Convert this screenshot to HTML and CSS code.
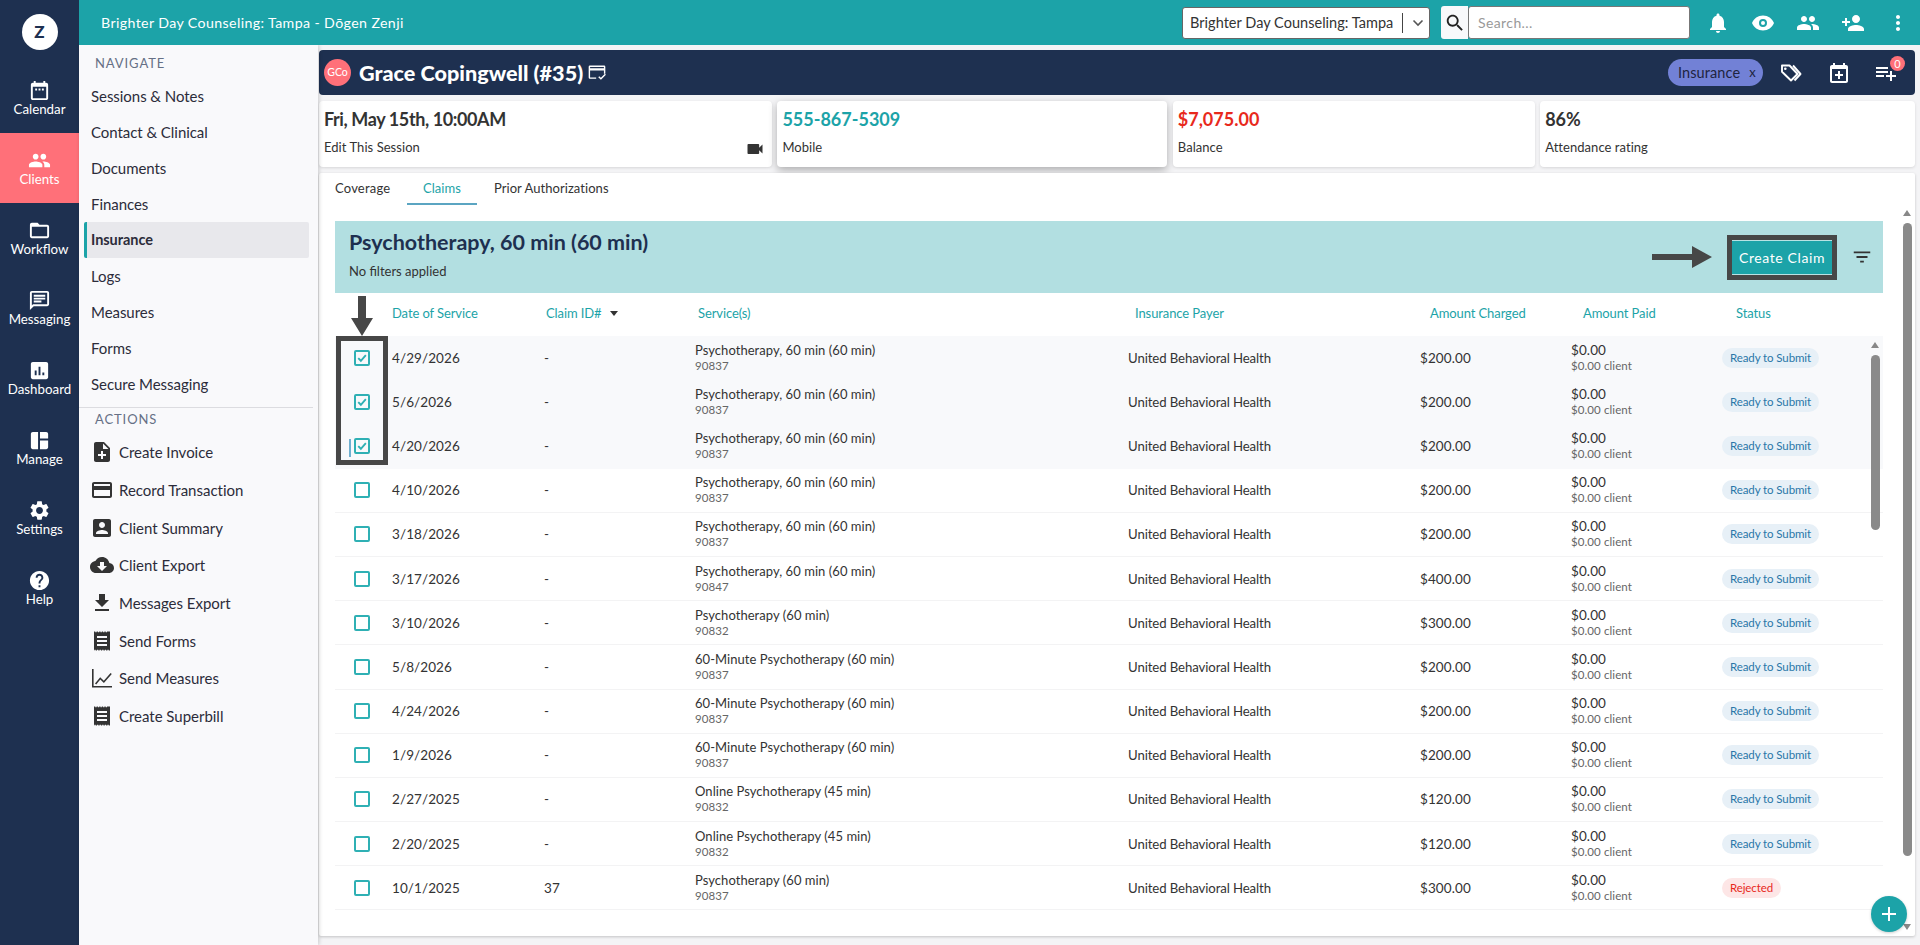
FILE: index.html
```html
<!DOCTYPE html>
<html lang="en">
<head>
<meta charset="utf-8">
<title>Insurance Claims</title>
<link rel="stylesheet" href="styles.css">
</head>
<body>
<svg class="sprite" aria-hidden="true">
<symbol id="i-cal" viewBox="0 0 24 24"><path d="M19 4h-1V2h-2v2H8V2H6v2H5c-1.1 0-2 .9-2 2v14c0 1.1.9 2 2 2h14c1.1 0 2-.9 2-2V6c0-1.1-.9-2-2-2zm0 16H5V8h14v12zM7.5 10h2v2h-2zm3.5 0h2v2h-2zm3.5 0h2v2h-2z"/></symbol>
<symbol id="i-people" viewBox="0 0 24 24"><path d="M16 11c1.66 0 2.99-1.34 2.99-3S17.66 5 16 5c-1.66 0-3 1.34-3 3s1.34 3 3 3zm-8 0c1.66 0 2.99-1.34 2.99-3S9.66 5 8 5C6.34 5 5 6.34 5 8s1.34 3 3 3zm0 2c-2.33 0-7 1.17-7 3.5V19h14v-2.5c0-2.33-4.67-3.5-7-3.5zm8 0c-.29 0-.62.02-.97.05 1.16.84 1.97 1.97 1.97 3.45V19h6v-2.5c0-2.33-4.67-3.5-7-3.5z"/></symbol>
<symbol id="i-folder" viewBox="0 0 24 24"><path d="M20 6h-8l-2-2H4c-1.1 0-1.99.9-1.99 2L2 18c0 1.1.9 2 2 2h16c1.1 0 2-.9 2-2V8c0-1.1-.9-2-2-2zm0 12H4V8h16v10z"/></symbol>
<symbol id="i-msg" viewBox="0 0 24 24"><path d="M20 2H4c-1.1 0-1.99.9-1.99 2L2 22l4-4h14c1.1 0 2-.9 2-2V4c0-1.1-.9-2-2-2zm0 14H5.17L4 17.17V4h16v12zM6 12h8v2H6zm0-3h12v2H6zm0-3h12v2H6z"/></symbol>
<symbol id="i-chart" viewBox="0 0 24 24"><path d="M19 3H5c-1.1 0-2 .9-2 2v14c0 1.1.9 2 2 2h14c1.1 0 2-.9 2-2V5c0-1.1-.9-2-2-2zM9 17H7v-5h2v5zm4 0h-2V8h2v9zm4 0h-2v-3h2v3z"/></symbol>
<symbol id="i-dash" viewBox="0 0 24 24"><path d="M10.5 21H5c-1.1 0-2-.9-2-2V5c0-1.1.9-2 2-2h5.5v18zm2 0H19c1.1 0 2-.9 2-2v-7h-8.500v9zM21 10V5c0-1.100-.9-2-2-2h-6.500v7H21z"/></symbol>
<symbol id="i-gear" viewBox="0 0 24 24"><path d="M19.14 12.94c.04-.3.06-.61.06-.94 0-.32-.02-.64-.07-.94l2.03-1.58c.18-.14.23-.41.12-.61l-1.92-3.32c-.12-.22-.37-.29-.59-.22l-2.39.96c-.5-.38-1.03-.7-1.62-.94l-.36-2.54c-.04-.24-.24-.41-.48-.41h-3.84c-.24 0-.43.17-.47.41l-.36 2.54c-.59.24-1.13.57-1.62.94l-2.39-.96c-.22-.08-.47 0-.59.22L2.74 8.87c-.12.21-.08.47.12.61l2.03 1.58c-.05.3-.09.63-.09.94s.02.64.07.94l-2.03 1.58c-.18.14-.23.41-.12.61l1.92 3.32c.12.22.37.29.59.22l2.39-.96c.5.38 1.03.7 1.62.94l.36 2.54c.05.24.24.41.48.41h3.84c.24 0 .44-.17.47-.41l.36-2.54c.59-.24 1.13-.56 1.62-.94l2.39.96c.22.08.47 0 .59-.22l1.92-3.32c.12-.22.07-.47-.12-.61l-2.01-1.58zM12 15.600c-1.980 0-3.600-1.620-3.600-3.600s1.620-3.600 3.600-3.600 3.600 1.620 3.600 3.600-1.620 3.600-3.600 3.600z"/></symbol>
<symbol id="i-help" viewBox="0 0 24 24"><path d="M12 2C6.48 2 2 6.48 2 12s4.48 10 10 10 10-4.48 10-10S17.52 2 12 2zm1 17h-2v-2h2v2zm2.070-7.750l-.9.920C13.450 12.900 13 13.500 13 15h-2v-.5c0-1.100.45-2.100 1.170-2.830l1.240-1.260c.37-.36.59-.86.59-1.410 0-1.100-.9-2-2-2s-2 .9-2 2H8c0-2.210 1.790-4 4-4s4 1.790 4 4c0 .88-.36 1.680-.93 2.250z"/></symbol>
<symbol id="i-note" viewBox="0 0 24 24"><path d="M14 2H6c-1.100 0-1.990.9-1.990 2L4 20c0 1.100.89 2 1.990 2H18c1.100 0 2-.9 2-2V8l-6-6zm2 14h-3v3h-2v-3H8v-2h3v-3h2v3h3v2zm-3-7V3.500L18.500 9H13z"/></symbol>
<symbol id="i-card" viewBox="0 0 24 24"><path d="M20 4H4c-1.110 0-1.990.89-1.990 2L2 18c0 1.110.89 2 2 2h16c1.110 0 2-.89 2-2V6c0-1.110-.89-2-2-2zm0 14H4v-6h16v6zm0-10H4V6h16v2z"/></symbol>
<symbol id="i-acct" viewBox="0 0 24 24"><path d="M3 5v14c0 1.100.89 2 2 2h14c1.100 0 2-.9 2-2V5c0-1.100-.9-2-2-2H5c-1.110 0-2 .9-2 2zm12 4c0 1.660-1.340 3-3 3s-3-1.340-3-3 1.340-3 3-3 3 1.340 3 3zm-9 8c0-2 4-3.100 6-3.100s6 1.100 6 3.100v1H6v-1z"/></symbol>
<symbol id="i-cloud" viewBox="0 0 24 24"><path d="M19.350 10.040C18.670 6.590 15.640 4 12 4 9.110 4 6.600 5.640 5.350 8.040 2.340 8.360 0 10.910 0 14c0 3.310 2.690 6 6 6h13c2.760 0 5-2.240 5-5 0-2.640-2.050-4.780-4.650-4.960zM17 13l-5 5-5-5h3V9h4v4h3z"/></symbol>
<symbol id="i-down" viewBox="0 0 24 24"><path d="M19 9h-4V3H9v6H5l7 7 7-7zM5 18v2h14v-2H5z"/></symbol>
<symbol id="i-bill" viewBox="0 0 24 24"><path fill-rule="evenodd" d="M4 2.500h1.300v.8h1.300v-.8h1.300v.8h1.300v-.8h1.300v.8h1.300v-.8h1.300v.8h1.300v-.8h1.300v.8h1.300v-.8H20v19h-1.300v-.8h-1.300v.8h-1.300v-.8h-1.300v.8h-1.300v-.8h-1.300v.8h-1.300v-.8H9.600v.8H8.300v-.8H7v.8H5.700v-.8H4.400v.8H4zM7 7v2h10V7zm0 4v2h10v-2zm0 4v2h10v-2z"/></symbol>
<symbol id="i-line" viewBox="0 0 24 24"><path d="M2 3h1.600v17H22v1.600H2zM5 17.500l5.200-6.200 3.600 3.400L20.600 7l1.200 1.100-7.900 8.900-3.600-3.400-4.100 4.900z"/></symbol>
<symbol id="i-video" viewBox="0 0 24 24"><path d="M17 10.500V7c0-.55-.45-1-1-1H4c-.55 0-1 .45-1 1v10c0 .55.45 1 1 1h12c.55 0 1-.45 1-1v-3.500l4 4v-11l-4 4z"/></symbol>
<symbol id="i-bell" viewBox="0 0 24 24"><path d="M12 22c1.100 0 2-.9 2-2h-4c0 1.100.89 2 2 2zm6-6v-5c0-3.070-1.640-5.640-4.500-6.320V4c0-.83-.67-1.500-1.500-1.500s-1.500.67-1.500 1.500v.68C7.630 5.360 6 7.920 6 11v5l-2 2v1h16v-1l-2-2z"/></symbol>
<symbol id="i-eye" viewBox="0 0 24 24"><path fill-rule="evenodd" d="M12 4.500C7 4.500 2.730 7.610 1 12c1.730 4.390 6 7.500 11 7.500s9.270-3.110 11-7.500c-1.730-4.390-6-7.500-11-7.500zM12 8a4 4 0 1 0 0 8 4 4 0 0 0 0-8zm0 2a2 2 0 1 1 0 4 2 2 0 0 1 0-4z"/></symbol>
<symbol id="i-padd" viewBox="0 0 24 24"><path d="M15 12c2.210 0 4-1.790 4-4s-1.790-4-4-4-4 1.790-4 4 1.790 4 4 4zm-9-2V7H4v3H1v2h3v3h2v-3h3v-2H6zm9 4c-2.670 0-8 1.340-8 4v2h16v-2c0-2.660-5.330-4-8-4z"/></symbol>
<symbol id="i-more" viewBox="0 0 24 24"><path d="M12 8c1.100 0 2-.9 2-2s-.9-2-2-2-2 .9-2 2 .9 2 2 2zm0 2c-1.100 0-2 .9-2 2s.9 2 2 2 2-.9 2-2-.9-2-2-2zm0 6c-1.100 0-2 .9-2 2s.9 2 2 2 2-.9 2-2-.9-2-2-2z"/></symbol>
<symbol id="i-search" viewBox="0 0 24 24"><path d="M15.500 14h-.79l-.28-.27C15.410 12.590 16 11.110 16 9.500 16 5.910 13.090 3 9.500 3S3 5.910 3 9.500 5.910 16 9.500 16c1.610 0 3.090-.59 4.230-1.570l.27.28v.79l5 4.990L20.490 19l-4.990-5zm-6 0C7.010 14 5 11.990 5 9.500S7.010 5 9.500 5 14 7.010 14 9.500 11.990 14 9.500 14z"/></symbol>
<symbol id="i-evadd" viewBox="0 0 24 24"><path d="M19 4h-1V2h-2v2H8V2H6v2H5c-1.100 0-2 .9-2 2v14c0 1.100.9 2 2 2h14c1.100 0 2-.9 2-2V6c0-1.100-.9-2-2-2zm0 16H5V8h14v12zm-8-10h2v3h3v2h-3v3h-2v-3H8v-2h3z"/></symbol>
<symbol id="i-pl" viewBox="0 0 24 24"><path d="M14 10H2v2h12v-2zm0-4H2v2h12V6zm4 8v-4h-2v4h-4v2h4v4h2v-4h4v-2h-4zM2 16h8v-2H2v2z"/></symbol>
<symbol id="i-filter" viewBox="0 0 24 24"><path d="M10 18h4v-2h-4v2zM3 6v2h18V6H3zm3 7h12v-2H6v2z"/></symbol>
<symbol id="i-tags" viewBox="0 0 24 24"><path fill="none" stroke="currentColor" stroke-width="1.900" stroke-linejoin="round" d="M3 4.500h7.500l8 8.500-6.500 6.500-9-8.700zM14 4.500l7.500 8.500-6 6.500"/><circle cx="6.300" cy="7.800" r="1.300"/></symbol>
<symbol id="i-cardchk" viewBox="0 0 24 24"><path d="M3.500 3h17A1.500 1.500 0 0 1 22 4.500V13h-1.700V9H3.700v8.300H11V19H3.500A1.500 1.500 0 0 1 2 17.500v-13A1.500 1.500 0 0 1 3.500 3zm.2 1.700v1.700h16.600V4.700zM13.500 17l1.200-1.200 2 2 4.800-4.800 1.200 1.200-6 6z"/></symbol>
<symbol id="i-check" viewBox="0 0 16 16"><path fill="none" stroke="currentColor" stroke-width="2.500" d="M3 8.200l3.500 3.500 6.600-7.400"/></symbol>
</svg>

<div class="app">
  <aside class="rail">
    <div class="logo-wrap"><div class="logo">Z</div></div>
    <a class="rail-item"><svg class="rail-ic"><use href="#i-cal"/></svg><span>Calendar</span></a>
    <a class="rail-item is-active"><svg class="rail-ic"><use href="#i-people"/></svg><span>Clients</span></a>
    <a class="rail-item"><svg class="rail-ic"><use href="#i-folder"/></svg><span>Workflow</span></a>
    <a class="rail-item"><svg class="rail-ic"><use href="#i-msg"/></svg><span>Messaging</span></a>
    <a class="rail-item"><svg class="rail-ic"><use href="#i-chart"/></svg><span>Dashboard</span></a>
    <a class="rail-item"><svg class="rail-ic"><use href="#i-dash"/></svg><span>Manage</span></a>
    <a class="rail-item"><svg class="rail-ic"><use href="#i-gear"/></svg><span>Settings</span></a>
    <a class="rail-item"><svg class="rail-ic"><use href="#i-help"/></svg><span>Help</span></a>
  </aside>

  <div class="shell">
    <header class="topbar">
      <div class="org">Brighter Day Counseling: Tampa - Dōgen Zenji</div>
      <div class="select"><span class="select-text">Brighter Day Counseling: Tampa</span><span class="select-sep"></span><svg class="select-chev" viewBox="0 0 12 8"><path d="M1.500 1.500L6 6l4.500-4.500" fill="none" stroke="#555" stroke-width="1.600"/></svg></div>
      <div class="search-btn"><svg class="ic-search"><use href="#i-search"/></svg></div>
      <div class="search-input">Search...</div>
      <div class="top-icons">
        <svg class="top-ic"><use href="#i-bell"/></svg>
        <svg class="top-ic"><use href="#i-eye"/></svg>
        <svg class="top-ic"><use href="#i-people"/></svg>
        <svg class="top-ic"><use href="#i-padd"/></svg>
        <svg class="top-ic"><use href="#i-more"/></svg>
      </div>
    </header>

    <div class="body-row">
      <nav class="sidenav">
        <div class="nav-head">NAVIGATE</div>
        <a class="nav-item">Sessions &amp; Notes</a>
        <a class="nav-item">Contact &amp; Clinical</a>
        <a class="nav-item">Documents</a>
        <a class="nav-item">Finances</a>
        <a class="nav-item is-current">Insurance</a>
        <a class="nav-item">Logs</a>
        <a class="nav-item">Measures</a>
        <a class="nav-item">Forms</a>
        <a class="nav-item">Secure Messaging</a>
        <div class="nav-rule"></div>
        <div class="nav-head nav-head-2">ACTIONS</div>
        <a class="act-item"><span class="act-ic"><svg><use href="#i-note"/></svg></span>Create Invoice</a>
        <a class="act-item"><span class="act-ic"><svg><use href="#i-card"/></svg></span>Record Transaction</a>
        <a class="act-item"><span class="act-ic"><svg><use href="#i-acct"/></svg></span>Client Summary</a>
        <a class="act-item"><span class="act-ic"><svg><use href="#i-cloud"/></svg></span>Client Export</a>
        <a class="act-item"><span class="act-ic"><svg><use href="#i-down"/></svg></span>Messages Export</a>
        <a class="act-item"><span class="act-ic"><svg><use href="#i-bill"/></svg></span>Send Forms</a>
        <a class="act-item"><span class="act-ic"><svg><use href="#i-line"/></svg></span>Send Measures</a>
        <a class="act-item"><span class="act-ic"><svg><use href="#i-bill"/></svg></span>Create Superbill</a>
      </nav>

      <main class="main">
        <section class="client-bar">
          <div class="avatar">GCo</div>
          <h1 class="client-name">Grace Copingwell (#35)</h1>
          <svg class="name-ic"><use href="#i-cardchk"/></svg>
          <div class="client-tools">
            <span class="chip">Insurance<span class="chip-x">x</span></span>
            <svg class="tool-ic tool-tag"><use href="#i-tags"/></svg>
            <svg class="tool-ic"><use href="#i-evadd"/></svg>
            <span class="tool-badge-wrap"><svg class="tool-ic"><use href="#i-pl"/></svg><span class="badge">0</span></span>
          </div>
        </section>

        <section class="stats">
          <div class="stat"><div class="stat-val stat-date">Fri, May 15th, 10:00AM</div><div class="stat-sub">Edit This Session</div><svg class="stat-video"><use href="#i-video"/></svg></div>
          <div class="stat stat-raised"><div class="stat-val stat-teal">555-867-5309</div><div class="stat-sub">Mobile</div></div>
          <div class="stat"><div class="stat-val stat-red">$7,075.00</div><div class="stat-sub">Balance</div></div>
          <div class="stat"><div class="stat-val">86%</div><div class="stat-sub">Attendance rating</div></div>
        </section>

        <section class="panel">
          <div class="tabs">
            <a class="tab">Coverage</a>
            <a class="tab is-on">Claims</a>
            <a class="tab">Prior Authorizations</a>
          </div>
          <div class="banner">
            <div class="banner-text">
              <h2 class="banner-title">Psychotherapy, 60 min (60 min)</h2>
              <div class="banner-sub">No filters applied</div>
            </div>
            <svg class="arrow-right" viewBox="0 0 60 22"><path d="M0 8h40V0l20 11-20 11v-8H0z"/></svg>
            <div class="btn-frame"><button class="btn">Create Claim</button></div>
            <svg class="filter-ic"><use href="#i-filter"/></svg>
          </div>

          <div class="thead">
            <span></span>
            <span class="th">Date of Service</span>
            <span class="th th-claim">Claim ID#<i class="sort"></i></span>
            <span class="th th-svc">Service(s)</span>
            <span class="th th-payer">Insurance Payer</span>
            <span class="th th-charged">Amount Charged</span>
            <span class="th th-paid">Amount Paid</span>
            <span class="th th-status">Status</span>
          </div>

          <div class="rows">
            <div class="row is-sel"><span class="cb is-on"><svg><use href="#i-check"/></svg></span><span>4/29/2026</span><span>-</span><span class="svc">Psychotherapy, 60 min (60 min)<small>90837</small></span><span class="payer">United Behavioral Health</span><span>$200.00</span><span class="paid">$0.00<small>$0.00 client</small></span><span><b class="pill">Ready to Submit</b></span></div>
            <div class="row is-sel"><span class="cb is-on"><svg><use href="#i-check"/></svg></span><span>5/6/2026</span><span>-</span><span class="svc">Psychotherapy, 60 min (60 min)<small>90837</small></span><span class="payer">United Behavioral Health</span><span>$200.00</span><span class="paid">$0.00<small>$0.00 client</small></span><span><b class="pill">Ready to Submit</b></span></div>
            <div class="row is-sel"><span class="cb is-on"><i class="tick"></i><svg><use href="#i-check"/></svg></span><span>4/20/2026</span><span>-</span><span class="svc">Psychotherapy, 60 min (60 min)<small>90837</small></span><span class="payer">United Behavioral Health</span><span>$200.00</span><span class="paid">$0.00<small>$0.00 client</small></span><span><b class="pill">Ready to Submit</b></span></div>
            <div class="row"><span class="cb"></span><span>4/10/2026</span><span>-</span><span class="svc">Psychotherapy, 60 min (60 min)<small>90837</small></span><span class="payer">United Behavioral Health</span><span>$200.00</span><span class="paid">$0.00<small>$0.00 client</small></span><span><b class="pill">Ready to Submit</b></span></div>
            <div class="row"><span class="cb"></span><span>3/18/2026</span><span>-</span><span class="svc">Psychotherapy, 60 min (60 min)<small>90837</small></span><span class="payer">United Behavioral Health</span><span>$200.00</span><span class="paid">$0.00<small>$0.00 client</small></span><span><b class="pill">Ready to Submit</b></span></div>
            <div class="row"><span class="cb"></span><span>3/17/2026</span><span>-</span><span class="svc">Psychotherapy, 60 min (60 min)<small>90847</small></span><span class="payer">United Behavioral Health</span><span>$400.00</span><span class="paid">$0.00<small>$0.00 client</small></span><span><b class="pill">Ready to Submit</b></span></div>
            <div class="row"><span class="cb"></span><span>3/10/2026</span><span>-</span><span class="svc">Psychotherapy (60 min)<small>90832</small></span><span class="payer">United Behavioral Health</span><span>$300.00</span><span class="paid">$0.00<small>$0.00 client</small></span><span><b class="pill">Ready to Submit</b></span></div>
            <div class="row"><span class="cb"></span><span>5/8/2026</span><span>-</span><span class="svc">60-Minute Psychotherapy (60 min)<small>90837</small></span><span class="payer">United Behavioral Health</span><span>$200.00</span><span class="paid">$0.00<small>$0.00 client</small></span><span><b class="pill">Ready to Submit</b></span></div>
            <div class="row"><span class="cb"></span><span>4/24/2026</span><span>-</span><span class="svc">60-Minute Psychotherapy (60 min)<small>90837</small></span><span class="payer">United Behavioral Health</span><span>$200.00</span><span class="paid">$0.00<small>$0.00 client</small></span><span><b class="pill">Ready to Submit</b></span></div>
            <div class="row"><span class="cb"></span><span>1/9/2026</span><span>-</span><span class="svc">60-Minute Psychotherapy (60 min)<small>90837</small></span><span class="payer">United Behavioral Health</span><span>$200.00</span><span class="paid">$0.00<small>$0.00 client</small></span><span><b class="pill">Ready to Submit</b></span></div>
            <div class="row"><span class="cb"></span><span>2/27/2025</span><span>-</span><span class="svc">Online Psychotherapy (45 min)<small>90832</small></span><span class="payer">United Behavioral Health</span><span>$120.00</span><span class="paid">$0.00<small>$0.00 client</small></span><span><b class="pill">Ready to Submit</b></span></div>
            <div class="row"><span class="cb"></span><span>2/20/2025</span><span>-</span><span class="svc">Online Psychotherapy (45 min)<small>90832</small></span><span class="payer">United Behavioral Health</span><span>$120.00</span><span class="paid">$0.00<small>$0.00 client</small></span><span><b class="pill">Ready to Submit</b></span></div>
            <div class="row"><span class="cb"></span><span>10/1/2025</span><span>37</span><span class="svc">Psychotherapy (60 min)<small>90837</small></span><span class="payer">United Behavioral Health</span><span>$300.00</span><span class="paid">$0.00<small>$0.00 client</small></span><span><b class="pill pill-red">Rejected</b></span></div>
            <div class="row row-cut"><span></span><span></span><span></span><span></span><span></span><span></span><span class="paid">$0.00<small>$0.00 client</small></span><span></span></div>
          </div>

          <!-- annotation overlays and scrollbars -->
          <div class="note-box"></div>
          <svg class="arrow-down" viewBox="0 0 22 40"><path d="M7 0h8v22h7L11 40 0 22h7z"/></svg>
          <div class="sb sb-inner"><i class="sb-up"></i><i class="sb-thumb"></i></div>
          <div class="sb sb-outer"><i class="sb-up"></i><i class="sb-thumb"></i><i class="sb-down"></i></div>
          <div class="fab"><svg viewBox="0 0 24 24"><path d="M19 13h-6v6h-2v-6H5v-2h6V5h2v6h6v2z"/></svg></div>
        </section>
      </main>
    </div>
  </div>
</div>
</body>
</html>
```

FILE: styles.css
```css
* { box-sizing: border-box; }
html, body { margin: 0; height: 100%; overflow: hidden; }
body { font-family: Lato, "Open Sans", sans-serif; color: #333; background: #f4f4f6; font-size: 14px; }
.sprite { display: none; }
svg { fill: currentColor; display: block; }
a { color: inherit; text-decoration: none; }
h1, h2 { margin: 0; }

.app { display: flex; height: 945px; width: 1920px; }

/* left rail */
.rail { width: 79px; flex: none; background: #1e3050; color: #fff; }
.logo-wrap { height: 63px; display: flex; align-items: center; justify-content: center; }
.logo { width: 36px; height: 36px; border-radius: 50%; background: #fff; color: #1e3050; font-weight: 900; font-size: 17px; line-height: 36px; text-align: center; }
.rail-item { height: 70px; display: flex; flex-direction: column; align-items: center; justify-content: center; padding-bottom: 1px; font-size: 13.3px; line-height: 16px; letter-spacing: 0; }
.rail-item.is-active { background: #ff7079; }
.rail-ic { width: 23px; height: 23px; margin-bottom: -1px; }

/* top bar */
.shell { flex: 1; display: flex; flex-direction: column; min-width: 0; }
.topbar { height: 45px; flex: none; background: #1ca3a8; display: flex; align-items: center; color: #fff; position: relative; z-index: 2; }
.org { width: 1103px; padding-left: 22px; font-size: 14.2px; letter-spacing: .38px; white-space: nowrap; }
.select { width: 248px; height: 32px; background: #fff; border: 1px solid #666; border-radius: 3px; display: flex; align-items: center; color: #333; padding-left: 7px; font-size: 14.5px; letter-spacing: .03px; }
.select-text { width: 212px; white-space: nowrap; }
.select-sep { width: 1px; height: 20px; background: #444; }
.select-chev { width: 12px; height: 8px; margin-left: 9px; }
.search-btn { width: 27px; height: 33px; margin-left: 11px; background: #f8f9fb; color: #222; display: flex; align-items: center; justify-content: center; border-radius: 3px 0 0 3px; }
.ic-search { width: 22px; height: 22px; }
.search-input { width: 222px; height: 33px; background: #fff; border: 1px solid #777; border-radius: 3px; color: #999; font-size: 14px; line-height: 31px; padding-left: 9px; letter-spacing: .4px; }
.top-icons { display: flex; margin-left: 16px; gap: 21px; }
.top-ic { width: 24px; height: 24px; }

/* side nav */
.body-row { flex: 1; display: flex; min-height: 0; }
.sidenav { width: 239px; flex: none; background: #f9f9fb; box-shadow: 1px 0 4px rgba(0,0,0,.18); padding-top: 9px; color: #2c2c3a; position: relative; z-index: 1; }
.nav-head { font-size: 13px; line-height: 18px; padding-left: 16px; letter-spacing: .9px; color: #667085; height: 24px; }
.nav-item { display: block; height: 36px; line-height: 36px; padding-left: 12px; width: 225px; font-size: 15px; letter-spacing: -.05px; border-radius: 2px; }
.nav-item.is-current { background: #e8e8ec; font-weight: 700; border-left: 3px solid #1ca3a8; margin-left: 5px; padding-left: 4px; font-size: 14.5px; }
.nav-rule { height: 1px; background: #dcdce0; margin: 5px 5px 0 0; }
.nav-head-2 { margin-top: 2px; height: 23.5px; }
.act-item { display: flex; align-items: center; height: 37.7px; font-size: 15px; letter-spacing: -.02px; padding-left: 12px; white-space: nowrap; }
.act-ic { width: 28px; display: flex; flex: none; color: #333; }
.act-ic svg { width: 24px; height: 24px; margin-left: -1px; }

/* main */
.main { flex: 1; min-width: 0; padding: 5px 5px 0 1px; display: flex; flex-direction: column; gap: 6px; }
.client-bar { height: 45px; flex: none; background: #1e3050; border-radius: 4px; display: flex; align-items: center; color: #fff; padding-left: 5px; }
.avatar { width: 27px; height: 27px; border-radius: 50%; background: #ff7079; color: #fff; font-size: 10.5px; line-height: 27px; text-align: center; }
.client-name { font-size: 21.6px; font-weight: 900; margin-left: 8px; letter-spacing: 0; white-space: nowrap; }
.name-ic { width: 20px; height: 20px; margin-left: 4px; }
.client-tools { margin-left: auto; display: flex; align-items: center; padding-right: 17px; }
.chip { width: 95px; height: 27px; border-radius: 14px; background: #7281d6; color: #1e2440; font-size: 14.5px; line-height: 27px; padding-left: 10px; letter-spacing: .1px; display: flex; }
.chip-x { margin-left: 9px; font-size: 13px; }
.tool-ic { width: 24px; height: 24px; }
.tool-tag { margin-left: 16px; }
.tool-ic + .tool-ic { margin-left: 24px; }
.tool-badge-wrap { position: relative; margin-left: 23px; }
.badge { position: absolute; left: 16px; top: -5px; width: 15px; height: 15px; border-radius: 50%; background: #ff7079; color: #fff; font-size: 11px; line-height: 15px; text-align: center; }

.stats { display: grid; grid-template-columns: 453px 390px 362px 375px; column-gap: 5.4px; height: 66px; flex: none; }
.stat { background: #fff; border-radius: 4px; box-shadow: 0 1px 3px rgba(0,0,0,.12); padding: 6px 5px; position: relative; }
.stat-raised { box-shadow: 0 3px 8px rgba(0,0,0,.3); }
.stat-val { font-size: 18px; font-weight: 700; line-height: 24px; color: #333; white-space: nowrap; }
.stat-date { letter-spacing: -.4px; }
.stat-teal { color: #1ca3a8; }
.stat-red { color: #e8291c; }
.stat-sub { font-size: 13px; line-height: 16px; margin-top: 8px; letter-spacing: .05px; color: #333; }
.stat-video { position: absolute; right: 7px; bottom: 8px; width: 20px; height: 20px; }

.panel { flex: none; height: 763px; background: #fff; box-shadow: 0 1px 3px rgba(0,0,0,.2); position: relative; padding: 0 32px 0 16px; overflow: hidden; border-radius: 2px; }
.tabs { display: flex; height: 32px; margin-left: -16px; }
.tab { padding: 0 16px; font-size: 13px; line-height: 30px; letter-spacing: .05px; color: #333; white-space: nowrap; }
.tab:first-child { width: 88px; letter-spacing: .2px; }
.tab.is-on { color: #1ca3a8; border-bottom: 2px solid #5ba5c2; margin-right: 1px; width: 70px; }
.banner { margin-top: 16px; height: 72px; background: #b2dfe1; display: flex; align-items: center; padding-left: 14px; }
.banner-text { flex: 1; }
.banner-title { font-size: 21.5px; font-weight: 700; line-height: 26px; color: #1e3050; letter-spacing: 0; margin-top: -6px; }
.banner-sub { font-size: 13px; line-height: 16px; margin-top: 8px; letter-spacing: 0; color: #333; }
.arrow-right { width: 60px; height: 22px; fill: #474747; margin-right: 15px; }
.btn-frame { border: 5px solid #474747; width: 110px; height: 45px; }
.btn { width: 100%; height: 100%; background: #1ca3a8; border: 0; border-top: 1px solid #b8e2e3; border-bottom: 1px solid #b8e2e3; color: #fff; font: 14px Lato, sans-serif; letter-spacing: .6px; padding: 0; }
.filter-ic { width: 22px; height: 22px; margin: 0 10px 0 14px; color: #333; }

.thead, .row { display: grid; grid-template-columns: 57px 152px 152px 432px 292px 151px 151px 161px; align-items: center; }
.thead { height: 43px; padding-bottom: 3px; }
.th { color: #1ca3a8; font-size: 13px; letter-spacing: -.1px; white-space: nowrap; }
.th-claim, .th-svc { padding-left: 2px; }
.th-payer { padding-left: 7px; }
.th-charged { padding-left: 10px; }
.th-paid { padding-left: 12px; }
.th-status { padding-left: 14px; }
.sort { display: inline-block; margin-left: 8px; vertical-align: 2px; border: 4px solid transparent; border-top: 5px solid #333; border-bottom: 0; }

.rows { height: 583px; overflow: hidden; }
.row { height: 44.2px; border-bottom: 1px solid #f3f3f4; font-size: 13.5px; letter-spacing: .1px; color: #333; }
.row.is-sel { background: #f8f9fb; border-bottom-color: transparent; }
.row-cut { border: 0; }
.cb { width: 16px; height: 16px; margin-left: 19px; border: 2px solid #2fb0b4; border-radius: 2px; position: relative; color: #2fb0b4; }
.cb svg { width: 12px; height: 12px; }
.tick { position: absolute; left: -7px; top: -1px; width: 2px; height: 18px; background: #6fb0d0; }
.svc { font-size: 13px; line-height: 15px; letter-spacing: .05px; white-space: nowrap; margin-left: -1px; }
.svc small, .paid small { display: block; font-size: 11.5px; color: #666; line-height: 15px; letter-spacing: .1px; }
.payer { font-size: 13.2px; letter-spacing: -.1px; }
.paid { font-size: 13.5px; line-height: 15px; }
.pill { display: inline-block; height: 20px; line-height: 20px; border-radius: 10px; background: #e7f0f7; color: #2a77a8; font-weight: 400; font-size: 11.5px; padding: 0 8px; letter-spacing: -.1px; white-space: nowrap; }
.pill-red { background: #fde6e6; color: #e8291c; }

/* overlays */
.note-box { position: absolute; left: 17px; top: 163px; width: 52px; height: 129px; border: 5px solid #474747; }
.arrow-down { position: absolute; left: 32px; top: 123px; width: 22px; height: 40px; fill: #474747; }
.sb { position: absolute; width: 9px; }
.sb i { display: block; }
.sb-inner { left: 1552px; top: 169px; }
.sb-outer { left: 1584px; top: 37px; height: 726px; }
.sb-up { width: 0; height: 0; border: 4.500px solid transparent; border-bottom: 6px solid #888; border-top: 0; }
.sb-thumb { width: 9px; background: #8a8a8a; border-radius: 4.500px; margin-top: 7px; }
.sb-inner .sb-thumb { height: 175px; }
.sb-outer .sb-thumb { height: 633px; }
.sb-down { position: absolute; bottom: 6px; left: 0; width: 0; height: 0; border: 4.500px solid transparent; border-top: 6px solid #888; border-bottom: 0; }
.fab { position: absolute; left: 1552px; top: 723px; width: 36px; height: 36px; border-radius: 50%; background: #1ca3a8; color: #fff; display: flex; align-items: center; justify-content: center; box-shadow: 0 1px 3px rgba(0,0,0,.2); }
.fab svg { width: 24px; height: 24px; }
```
